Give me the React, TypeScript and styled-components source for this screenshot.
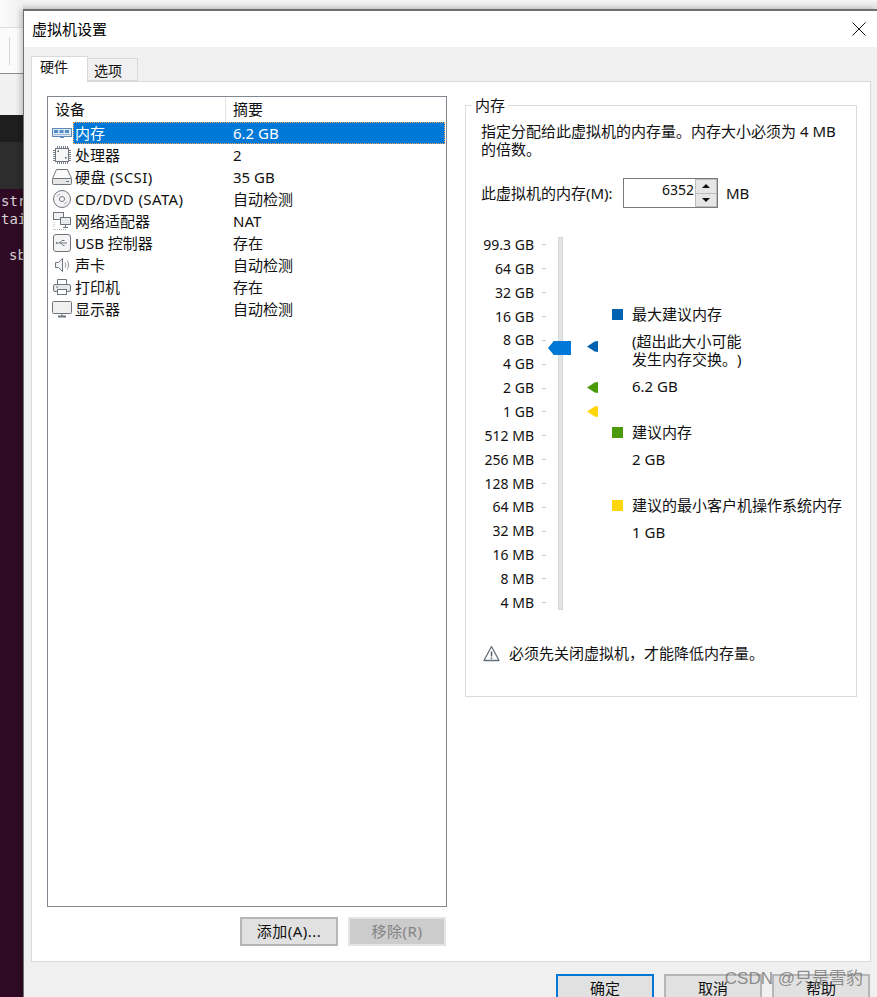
import React from "react";
import styled, { createGlobalStyle } from "styled-components";

const GlobalStyle = createGlobalStyle`
  html, body {
    margin: 0;
    padding: 0;
    height: 997px;
    overflow: hidden;
    background: #300a24;
  }
  * {
    box-sizing: border-box;
  }
`;

const stroke = "#6e757c";

const MemoryIcon = () => (
  <svg width="22" height="20" viewBox="0 0 22 20">
    <rect x="1.5" y="5.5" width="19" height="8" fill="#dde8f3" stroke="#5d8ab8" />
    <rect x="3" y="7" width="4" height="3" fill="#4f8cc9" />
    <rect x="8.5" y="7" width="4" height="3" fill="#4f8cc9" />
    <rect x="14" y="7" width="4" height="3" fill="#4f8cc9" />
    <path d="M3 11.5h16" stroke="#9db9d6" />
    <path d="M9 14.5h4" stroke="#5d8ab8" />
  </svg>
);

const CpuIcon = () => (
  <svg width="22" height="20" viewBox="0 0 22 20" fill="none">
    <rect x="4.5" y="3.5" width="13" height="13" stroke={stroke} fill="#f7f7f7" />
    <path
      d="M6.5 1v2M8.5 1v2M10.5 1v2M12.5 1v2M14.5 1v2M16.5 1v2M6.5 17v2M8.5 17v2M10.5 17v2M12.5 17v2M14.5 17v2M16.5 17v2M2 5.5h2M2 7.5h2M2 9.5h2M2 11.5h2M2 13.5h2M2 15.5h2M18 5.5h2M18 7.5h2M18 9.5h2M18 11.5h2M18 13.5h2M18 15.5h2"
      stroke="#7d8388"
    />
    <rect x="6.5" y="5.5" width="1.5" height="1.5" fill="#555" />
    <rect x="14" y="12" width="1.5" height="1.5" fill="#555" />
  </svg>
);

const DiskIcon = () => (
  <svg width="22" height="20" viewBox="0 0 22 20" fill="none">
    <path d="M5.5 2.5h11l4 9h-19z" stroke={stroke} fill="#fbfbfb" />
    <rect x="1.5" y="11.5" width="19" height="6" rx="1" stroke={stroke} fill="#e6e6e6" />
    <path d="M15 14.5h3" stroke={stroke} />
  </svg>
);

const CdIcon = () => (
  <svg width="22" height="20" viewBox="0 0 22 20" fill="none">
    <circle cx="11" cy="10" r="8.5" stroke={stroke} fill="#f4f4f4" />
    <circle cx="11" cy="10" r="2.5" stroke={stroke} fill="#fff" />
    <path d="M6 7.5a6 6 0 0 1 3-2.5M16 12.5a6 6 0 0 1-3 2.5" stroke="#a4a9ad" />
  </svg>
);

const NetworkIcon = () => (
  <svg width="22" height="20" viewBox="0 0 22 20" fill="none">
    <rect x="2.5" y="1.5" width="10" height="7" stroke={stroke} fill="#f2f2f2" />
    <rect x="9.5" y="6.5" width="10" height="7" stroke={stroke} fill="#e9e9e9" />
    <path d="M14.5 14v2M12 16.5h5" stroke={stroke} />
    <path d="M2 18.5h14M3 11v5" stroke="#a8adb1" strokeDasharray="1 1" />
  </svg>
);

const UsbIcon = () => (
  <svg width="22" height="20" viewBox="0 0 22 20" fill="none">
    <rect x="2.5" y="1.5" width="17" height="17" rx="2.5" stroke={stroke} fill="#f4f4f4" />
    <path d="M6 10h10M8.5 10l2.5-2.5h2.5M10 10l2 2.5h1.5" stroke={stroke} />
    <path d="M6 8.5L4.5 10 6 11.5z" fill={stroke} />
  </svg>
);

const SoundIcon = () => (
  <svg width="22" height="20" viewBox="0 0 22 20" fill="none">
    <path d="M4.5 7.5h3l4-4v13l-4-4h-3z" stroke={stroke} fill="#f4f4f4" />
    <path d="M14 7.5a4 4 0 0 1 0 5M16 5.5a7 7 0 0 1 0 9" stroke="#8d9398" />
  </svg>
);

const PrinterIcon = () => (
  <svg width="22" height="20" viewBox="0 0 22 20" fill="none">
    <path d="M6.5 7V2.5h9V7" stroke={stroke} fill="#fff" />
    <rect x="2.5" y="7.5" width="17" height="7" rx="1.5" stroke={stroke} fill="#e8e8e8" />
    <rect x="6.5" y="12.5" width="9" height="5" stroke={stroke} fill="#fff" />
    <path d="M5 10h2" stroke={stroke} />
  </svg>
);

const DisplayIcon = () => (
  <svg width="22" height="20" viewBox="0 0 22 20" fill="none">
    <rect x="1.5" y="2.5" width="19" height="12" rx="1" stroke={stroke} fill="#f0f0f0" />
    <path d="M7 17.5h8" stroke={stroke} strokeWidth="2" />
    <path d="M11 15v2" stroke={stroke} />
  </svg>
);

const WarningIcon = () => (
  <svg width="17" height="17" viewBox="0 0 17 17" fill="none">
    <path d="M8.5 1.5L16 15.5H1z" stroke="#66717c" strokeWidth="1.3" fill="#fff" strokeLinejoin="round" />
    <path d="M8.5 6.5v5M8.5 12.5v1.5" stroke="#56616c" strokeWidth="1.5" />
  </svg>
);

const devices = [
  { icon: <MemoryIcon />, name: "内存", summary: "6.2 GB", selected: true },
  { icon: <CpuIcon />, name: "处理器", summary: "2" },
  { icon: <DiskIcon />, name: "硬盘 (SCSI)", summary: "35 GB", tracked: true },
  { icon: <CdIcon />, name: "CD/DVD (SATA)", summary: "自动检测", tracked: true },
  { icon: <NetworkIcon />, name: "网络适配器", summary: "NAT" },
  { icon: <UsbIcon />, name: "USB 控制器", summary: "存在" },
  { icon: <SoundIcon />, name: "声卡", summary: "自动检测" },
  { icon: <PrinterIcon />, name: "打印机", summary: "存在" },
  { icon: <DisplayIcon />, name: "显示器", summary: "自动检测" },
];

const scaleLabels = [
  "99.3 GB", "64 GB", "32 GB", "16 GB", "8 GB", "4 GB", "2 GB", "1 GB",
  "512 MB", "256 MB", "128 MB", "64 MB", "32 MB", "16 MB", "8 MB", "4 MB",
];

const App = () => {
  return (
    <Screen>
      <GlobalStyle />
      <TopStrip />
      <Backdrop>
        <BackTitle />
        <BackToolbar><BackDivider /></BackToolbar>
        <BackTabs />
        <BackDark />
        <BackDarker />
        <Terminal>
          <TermLine>str</TermLine>
          <TermLine>tai</TermLine>
          <TermLine $indent>sb</TermLine>
        </Terminal>
      </Backdrop>

      <Dialog>
        <TitleBar>
          <Title>虚拟机设置</Title>
          <CloseIcon width="14" height="14" viewBox="0 0 14 14">
            <path d="M0.5 0.5L13.5 13.5M13.5 0.5L0.5 13.5" stroke="#111" />
          </CloseIcon>
        </TitleBar>

        <DialogBody>
          <Tabs>
            <Tab $active>硬件</Tab>
            <Tab>选项</Tab>
          </Tabs>

          <Panel>
            <DeviceColumn>
              <DeviceList>
                <ListHeader>
                  <HeaderCell $width={178}>设备</HeaderCell>
                  <HeaderCell $width={220}>摘要</HeaderCell>
                </ListHeader>
                {devices.map((d) => (
                  <DeviceRow key={d.name}>
                    <IconSlot>{d.icon}</IconSlot>
                    <RowBody $selected={d.selected}>
                      <DeviceName $tracked={d.tracked}>{d.name}</DeviceName>
                      <span>{d.summary}</span>
                    </RowBody>
                  </DeviceRow>
                ))}
              </DeviceList>
              <ListActions>
                <PushButton>添加(A)...</PushButton>
                <PushButton disabled>移除(R)</PushButton>
              </ListActions>
            </DeviceColumn>

            <MemoryGroup>
              <GroupLegend>内存</GroupLegend>
              <Description>
                指定分配给此虚拟机的内存量。内存大小必须为 4 MB 的倍数。
              </Description>

              <MemoryRow>
                <MemoryLabel>此虚拟机的内存(M):</MemoryLabel>
                <Spinner>
                  <SpinValue>6352</SpinValue>
                  <SpinButtons>
                    <SpinButton><ArrowUp /></SpinButton>
                    <SpinButton><ArrowDown /></SpinButton>
                  </SpinButtons>
                </Spinner>
                <span>MB</span>
              </MemoryRow>

              <ScaleArea>
                <ScaleLabels>
                  {scaleLabels.map((label, i) => (
                    <ScaleLabel key={i}>
                      {label}
                      <Tick />
                    </ScaleLabel>
                  ))}
                </ScaleLabels>
                <Track>
                  <Thumb />
                </Track>
                <MarkerRail>
                  <Marker $top={109} $color="#0063b1" />
                  <Marker $top={150} $color="#4a9a0a" />
                  <Marker $top={174} $color="#ffd60a" />
                </MarkerRail>
                <LegendColumn>
                  <LegendTitle>
                    <Swatch $color="#0063b1" />
                    最大建议内存
                  </LegendTitle>
                  <LegendNote>(超出此大小可能<br />发生内存交换。)</LegendNote>
                  <LegendNote>6.2 GB</LegendNote>
                  <LegendTitle $spaced>
                    <Swatch $color="#4a9a0a" />
                    建议内存
                  </LegendTitle>
                  <LegendNote>2 GB</LegendNote>
                  <LegendTitle $spaced>
                    <Swatch $color="#ffd60a" />
                    建议的最小客户机操作系统内存
                  </LegendTitle>
                  <LegendNote>1 GB</LegendNote>
                </LegendColumn>
              </ScaleArea>

              <WarningRow>
                <WarningIcon />
                必须先关闭虚拟机，才能降低内存量。
              </WarningRow>
            </MemoryGroup>
          </Panel>

          <Footer>
            <PushButton $primary>确定</PushButton>
            <PushButton>取消</PushButton>
            <PushButton>帮助</PushButton>
          </Footer>
        </DialogBody>
      </Dialog>

      <Watermark>CSDN @只是雪豹</Watermark>
    </Screen>
  );
};

// 바탕 화면
const Screen = styled.div`
  position: relative;
  width: 877px;
  height: 997px;
  overflow: hidden;
  display: grid;
  grid-template-columns: 23px 1fr;
  grid-template-rows: 9px 1fr;
  font-family: "Noto Sans", "Noto Sans CJK SC", sans-serif;
  font-size: 15px;
  line-height: 18px;
  color: #111;
  text-spacing-trim: space-all;
`;

const TopStrip = styled.div`
  grid-column: 2;
  grid-row: 1;
  background: linear-gradient(#f6f6f6, #dcdcdc);
`;

const Backdrop = styled.div`
  grid-column: 1;
  grid-row: 1 / 3;
  display: flex;
  flex-direction: column;
  overflow: hidden;
`;

const BackTitle = styled.div`
  height: 28px;
  background: linear-gradient(90deg, #fcfcfc, #f0f0f0);
  border-bottom: 1px solid #dddddd;
`;

const BackToolbar = styled.div`
  height: 46px;
  padding: 9px 0 0 9px;
  background: #fbfbfb;
  border-bottom: 1px solid #8c8c8c;
`;

const BackDivider = styled.div`
  width: 1px;
  height: 28px;
  background: #d8d8d8;
`;

const BackTabs = styled.div`
  height: 41px;
  background: #f1f1f1;
`;

const BackDark = styled.div`
  height: 27px;
  background: #1e1e1e;
`;

const BackDarker = styled.div`
  height: 47px;
  background: #2d2d2d;
`;

const Terminal = styled.div`
  flex: 1;
  padding: 3px 0 0 1px;
  background: #300a24;
  color: #d8d4d6;
  font-family: "DejaVu Sans Mono", monospace;
  font-size: 14px;
  white-space: nowrap;
`;

const TermLine = styled.div<{ $indent?: boolean }>`
  height: 18px;
  margin-left: ${(p) => (p.$indent ? "8px" : "0")};
  margin-top: ${(p) => (p.$indent ? "18px" : "0")};
`;

// 대화 상자
const Dialog = styled.div`
  grid-column: 2;
  grid-row: 2;
  display: flex;
  flex-direction: column;
  min-height: 0;
  border-top: 2px solid #6f6f6f;
  border-left: 1px solid #6f6f6f;
  background: #f0f0f0;
  box-shadow: -3px 0 5px rgba(0, 0, 0, 0.18);
`;

const TitleBar = styled.div`
  flex: none;
  height: 36px;
  padding: 0 11px 1px 8px;
  display: flex;
  align-items: center;
  justify-content: space-between;
  background: #fff;
`;

const Title = styled.div`
  color: #000;
`;

const CloseIcon = styled.svg`
  display: block;
`;

const DialogBody = styled.div`
  flex: 1;
  min-height: 0;
  padding: 9px 6px 0 7px;
  display: flex;
  flex-direction: column;
`;

const Tabs = styled.div`
  flex: none;
  height: 25px;
  display: flex;
  align-items: flex-end;
`;

const Tab = styled.div<{ $active?: boolean }>`
  position: relative;
  z-index: ${(p) => (p.$active ? 1 : 0)};
  height: ${(p) => (p.$active ? "26px" : "23px")};
  margin-bottom: ${(p) => (p.$active ? "-1px" : "0")};
  padding: ${(p) => (p.$active ? "1px 0 0 8px" : "3px 0 0 6px")};
  width: ${(p) => (p.$active ? "57px" : "50px")};
  font-size: 14px;
  background: ${(p) => (p.$active ? "#fff" : "#f0f0f0")};
  border: 1px solid #d9d9d9;
  border-bottom: ${(p) => (p.$active ? "none" : "1px solid #d9d9d9")};
  border-left: ${(p) => (p.$active ? "1px solid #d9d9d9" : "none")};
`;

const Panel = styled.div`
  flex: none;
  height: 881px;
  padding: 14px 13px 0 15px;
  display: flex;
  justify-content: space-between;
  align-items: flex-start;
  background: #fff;
  border: 1px solid #d9d9d9;
`;

const DeviceColumn = styled.div`
  width: 400px;
  display: flex;
  flex-direction: column;
`;

const DeviceList = styled.div`
  height: 811px;
  border: 1px solid #828790;
`;

const ListHeader = styled.div`
  height: 25px;
  display: flex;
`;

const HeaderCell = styled.div<{ $width: number }>`
  width: ${(p) => p.$width}px;
  padding: 3px 0 0 7px;
  border-right: 1px solid #e3e3e3;

  &:last-child {
    border-right: none;
  }
`;

const DeviceRow = styled.div`
  height: 22px;
  display: flex;
`;

const IconSlot = styled.div`
  width: 25px;
  flex: none;
  padding-left: 3px;
  display: flex;
  align-items: center;

  svg {
    display: block;
  }
`;

const RowBody = styled.div<{ $selected?: boolean }>`
  flex: 1;
  margin-right: 1px;
  display: flex;
  align-items: center;
  padding: 0 0 1px 2px;
  background: ${(p) => (p.$selected ? "#0078d7" : "transparent")};
  color: ${(p) => (p.$selected ? "#fff" : "#111")};
  outline: ${(p) => (p.$selected ? "1px dotted #f0a860" : "none")};
  outline-offset: -1px;
`;

const DeviceName = styled.div<{ $tracked?: boolean }>`
  width: 158px;
  flex: none;
  letter-spacing: ${(p) => (p.$tracked ? "0.4px" : "0")};
`;

const ListActions = styled.div`
  margin-top: 10px;
  margin-right: 1px;
  display: flex;
  justify-content: flex-end;
  gap: 10px;

  button {
    letter-spacing: 0.5px;
  }
`;

const PushButton = styled.button<{ $primary?: boolean }>`
  width: 98px;
  height: 29px;
  padding: 0 0 1px;
  font: inherit;
  color: #111;
  background: #e1e1e1;
  border: 2px solid ${(p) => (p.$primary ? "#0078d7" : "#b6b6b6")};

  &:disabled {
    background: #cccccc;
    color: #838383;
    border-color: #e4e4e4;
  }
`;

const MemoryGroup = styled.fieldset`
  width: 392px;
  height: 601px;
  margin: 0;
  padding: 8px 15px 0;
  min-width: 0;
  border: 1px solid #dcdcdc;
`;

const GroupLegend = styled.legend`
  margin-left: -9px;
  padding: 0 3px;
  line-height: 18px;
`;

const Description = styled.div`
  width: 358px;
`;

const MemoryRow = styled.div`
  margin-top: 20px;
  height: 30px;
  display: flex;
  align-items: center;
`;

const MemoryLabel = styled.div`
  width: 142px;
`;

const Spinner = styled.div`
  width: 95px;
  height: 30px;
  margin-right: 8px;
  display: flex;
  background: #fff;
  border: 1px solid #7a7a7a;
`;

const SpinValue = styled.div`
  flex: 1;
  padding: 2px 1px 0 0;
  text-align: right;
  font-size: 14px;
`;

const SpinButtons = styled.div`
  width: 22px;
  padding: 1px;
  display: flex;
  flex-direction: column;
  gap: 1px;
  background: #bcbcbc;
`;

const SpinButton = styled.div`
  flex: 1;
  display: flex;
  align-items: center;
  justify-content: center;
  background: #e6e6e6;
`;

const ArrowUp = styled.div`
  width: 0;
  height: 0;
  border-left: 4px solid transparent;
  border-right: 4px solid transparent;
  border-bottom: 4px solid #111;
`;

const ArrowDown = styled.div`
  width: 0;
  height: 0;
  border-left: 4px solid transparent;
  border-right: 4px solid transparent;
  border-top: 4px solid #111;
`;

const ScaleArea = styled.div`
  margin-top: 24px;
  height: 382px;
  display: flex;
  align-items: flex-start;
`;

const ScaleLabels = styled.div`
  width: 65px;
  flex: none;
  padding-top: 1px;
`;

const ScaleLabel = styled.div`
  height: 23.87px;
  display: flex;
  align-items: center;
  justify-content: flex-end;
  gap: 8px;
  font-size: 14px;
  white-space: nowrap;
`;

const Tick = styled.div`
  width: 4px;
  height: 1px;
  background: #c8c8c8;
`;

const Track = styled.div`
  position: relative;
  flex: none;
  width: 5px;
  height: 373px;
  margin: 5px 0 0 12px;
  background: #e3e5e4;
  border: 1px solid #d6d8d7;
`;

const Thumb = styled.div`
  position: absolute;
  left: -11px;
  top: 103px;
  width: 23px;
  height: 14px;
  background: #0078d7;
  clip-path: polygon(0 50%, 25% 0, 100% 0, 100% 100%, 25% 100%);
`;

const MarkerRail = styled.div`
  position: relative;
  flex: none;
  width: 11px;
  height: 100%;
  margin-left: 24px;
`;

const Marker = styled.div<{ $top: number; $color: string }>`
  position: absolute;
  left: 0;
  top: ${(p) => p.$top}px;
  width: 11px;
  height: 11px;
  background: ${(p) => p.$color};
  clip-path: polygon(0 50%, 70% 5%, 100% 0, 100% 100%, 70% 95%);
`;

const LegendColumn = styled.div`
  margin-left: 14px;
  padding-top: 73px;
  white-space: nowrap;
`;

const LegendTitle = styled.div<{ $spaced?: boolean }>`
  display: flex;
  align-items: center;
  gap: 9px;
  margin-top: ${(p) => (p.$spaced ? "28px" : "0")};
`;

const Swatch = styled.div<{ $color: string }>`
  width: 11px;
  height: 11px;
  flex: none;
  background: ${(p) => p.$color};
`;

const LegendNote = styled.div`
  margin: 9px 0 0 20px;
`;

const WarningRow = styled.div`
  margin-top: 29px;
  padding-left: 2px;
  display: flex;
  align-items: center;
  gap: 9px;
  height: 20px;

  svg {
    display: block;
  }
`;

const Footer = styled.div`
  flex: none;
  padding: 12px 1px 0 0;
  display: flex;
  justify-content: flex-end;
  gap: 10px;
`;

const Watermark = styled.div`
  position: absolute;
  right: 14px;
  top: 969px;
  font-family: "Liberation Sans", "Noto Sans CJK SC", sans-serif;
  font-size: 17px;
  line-height: 20px;
  color: rgba(110, 110, 110, 0.75);
  white-space: nowrap;
`;

export default App;
